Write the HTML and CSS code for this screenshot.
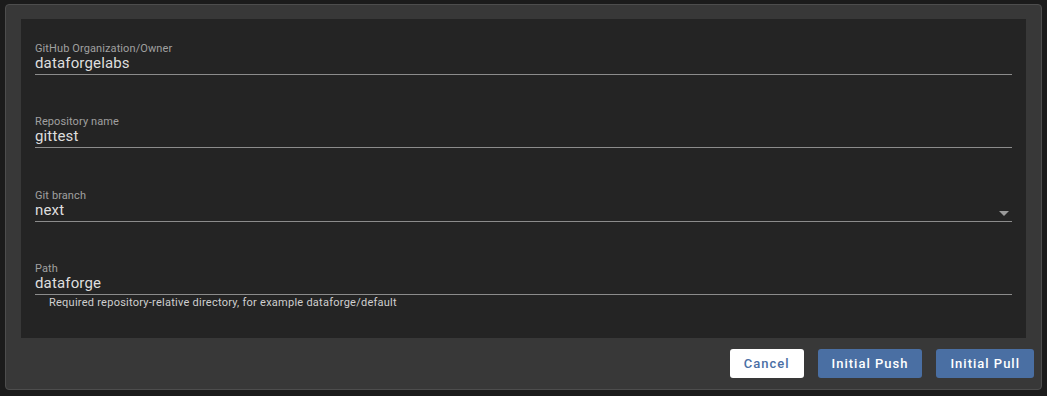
FILE: index.html
```html
<!DOCTYPE html>
<html lang="en">
<head>
    <meta charset="UTF-8">
    <meta name="viewport" content="width=device-width, initial-scale=1.0">
    <title>Git Settings</title>
    <link rel="stylesheet" href="styles.css">
</head>
<body>
    <div class="dialog">
        <div class="panel">
            <div class="field">
                <div class="label">GitHub Organization/Owner</div>
                <div class="value">dataforgelabs</div>
            </div>
            <div class="field">
                <div class="label">Repository name</div>
                <div class="value">gittest</div>
            </div>
            <div class="field select">
                <div class="label">Git branch</div>
                <div class="value">next</div>
                <span class="arrow"></span>
            </div>
            <div class="group">
                <div class="field">
                    <div class="label">Path</div>
                    <div class="value">dataforge</div>
                </div>
                <div class="helper">Required repository-relative directory, for example dataforge/default</div>
            </div>
        </div>
        <div class="actions">
            <button class="btn cancel">Cancel</button>
            <button class="btn primary">Initial Push</button>
            <button class="btn primary">Initial Pull</button>
        </div>
    </div>
</body>
</html>
```

FILE: styles.css
```css
body {
    margin: 0;
    padding: 4px 5px;
    background: #1b1b1b;
    font-family: Roboto, "Liberation Sans", sans-serif;
}
.dialog {
    box-sizing: border-box;
    width: 1037px;
    height: 386px;
    background: #383838;
    border: 1px solid #4d4d4d;
    border-radius: 4px;
    padding: 14px 0 0 15px;
    display: flex;
    flex-direction: column;
}
.panel {
    box-sizing: border-box;
    width: 1005px;
    height: 319px;
    background: #242424;
    padding: 25px 14px 0 14px;
    display: flex;
    flex-direction: column;
    gap: 42.4px;
}
.field {
    position: relative;
    border-bottom: 1px solid #8c8c8c;
}
.label {
    font-size: 11px;
    line-height: 10px;
    color: #a0a0a0;
    letter-spacing: 0.1px;
}
.value {
    font-size: 15px;
    line-height: 18px;
    color: #dedede;
    padding-bottom: 2px;
    letter-spacing: 0.15px;
}
.arrow {
    position: absolute;
    right: 3px;
    top: 20px;
    width: 0;
    height: 0;
    border-left: 5px solid transparent;
    border-right: 5px solid transparent;
    border-top: 5px solid #9a9a9a;
}
.helper {
    padding: 1px 0 0 14px;
    font-size: 11px;
    line-height: 14px;
    color: #cfcfcf;
    letter-spacing: 0.25px;
}
.actions {
    display: flex;
    justify-content: flex-end;
    gap: 14px;
    padding: 11px 7px 0 0;
}
.btn {
    height: 29px;
    padding: 0 14px;
    border: none;
    border-radius: 3px;
    font-family: Roboto, "Liberation Sans", sans-serif;
    font-size: 13px;
    font-weight: 500;
    letter-spacing: 1px;
    cursor: pointer;
}
.cancel {
    background: #fff;
    color: #4a6fa5;
}
.primary {
    background: #4a6fa3;
    color: #fff;
}
```
